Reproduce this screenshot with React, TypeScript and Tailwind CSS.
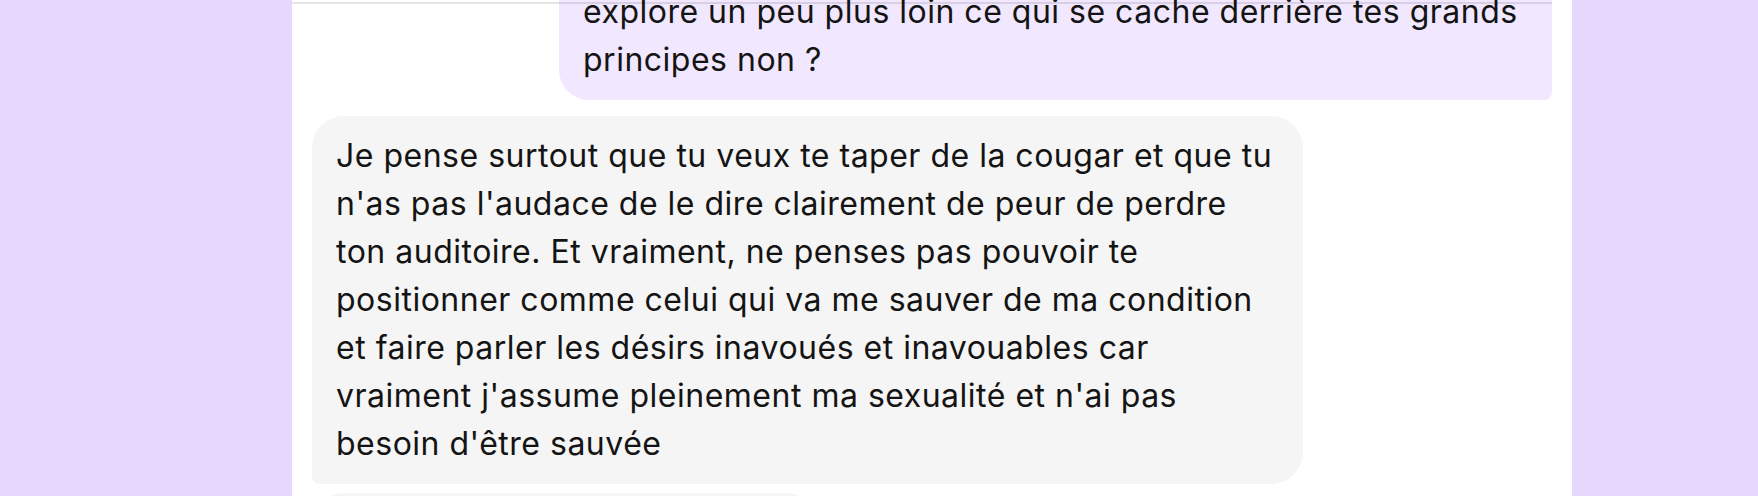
const userText = `explore un peu plus loin ce qui se cache derrière tes grands
principes non ?`

const botText = `Je pense surtout que tu veux te taper de la cougar et que tu
n'as pas l'audace de le dire clairement de peur de perdre
ton auditoire. Et vraiment, ne penses pas pouvoir te
positionner comme celui qui va me sauver de ma condition
et faire parler les désirs inavoués et inavouables car
vraiment j'assume pleinement ma sexualité et n'ai pas
besoin d'être sauvée`

const App = () => {
    return (
        <div className="flex h-[496px] w-full overflow-hidden bg-[#e7d8fd] font-['Inter',sans-serif] text-[#141414]">
            <div className="w-[292px] shrink-0" />
            <div className="relative w-[1280px] shrink-0 bg-white px-5">
                <div className="absolute left-0 right-5 top-[2px] h-[2px] bg-black/10" />
                <div className="flex justify-end">
                    <div className="-mt-[28px] w-[993px] whitespace-pre-line rounded-bl-[30px] rounded-br-[8px] bg-[#f1e7fe] px-6 py-4 text-[32px] leading-[48px] tracking-[0.5px]">
                        {userText}
                    </div>
                </div>
                <div className="mt-[16px] flex flex-col gap-[9px]">
                    <div className="w-[991px] whitespace-pre-line rounded-tl-[32px] rounded-tr-[32px] rounded-br-[32px] rounded-bl-[8px] bg-[#f5f5f5] px-6 py-4 text-[32px] leading-[48px] tracking-[0.5px]">
                        {botText}
                    </div>
                    <div className="h-[60px] w-[505px] rounded-t-[32px] bg-[#f5f5f5]" />
                </div>
            </div>
            <div className="flex-1" />
        </div>
    )
}

export default App
